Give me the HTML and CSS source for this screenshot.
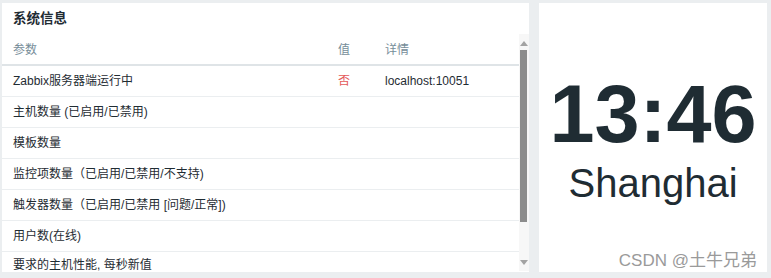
FILE: index.html
```html
<!DOCTYPE html>
<html lang="zh-CN">
<head>
<meta charset="UTF-8" />
<title>系统信息</title>
<link rel="stylesheet" href="styles.css">
</head>
<body>

  <div class="dashboard">

    <!-- 系统信息 -->
    <div class="widget info">
      <div class="widget-head">系统信息</div>
      <div class="widget-body">
        <div class="table-wrap">
          <table class="list">
            <thead>
              <tr>
                <th class="c-param">参数</th>
                <th class="c-value">值</th>
                <th>详情</th>
              </tr>
            </thead>
            <tbody>
              <tr>
                <td>Zabbix服务器端运行中</td>
                <td class="red">否</td>
                <td>localhost:10051</td>
              </tr>
              <tr><td>主机数量 (已启用/已禁用)</td><td></td><td></td></tr>
              <tr><td>模板数量</td><td></td><td></td></tr>
              <tr><td>监控项数量（已启用/已禁用/不支持)</td><td></td><td></td></tr>
              <tr><td>触发器数量（已启用/已禁用 [问题/正常])</td><td></td><td></td></tr>
              <tr><td>用户数(在线)</td><td></td><td></td></tr>
              <tr><td class="last">要求的主机性能, 每秒新值</td><td></td><td></td></tr>
            </tbody>
          </table>
        </div>
        <div class="scrollbar">
          <div class="sb-btn"><span class="arrow up"></span></div>
          <div class="sb-track"><div class="sb-thumb"></div></div>
          <div class="sb-btn"><span class="arrow down"></span></div>
        </div>
      </div>
    </div>

    <!-- 时钟 -->
    <div class="widget clock">
      <div class="clock-time">13:46</div>
      <div class="clock-zone">Shanghai</div>
    </div>

  </div>

  <div class="watermark">CSDN @土牛兄弟</div>

</body>
</html>
```

FILE: styles.css
```css
:root {
  --fondo: #ebeef0;
  --texto: #1f2c33;
  --cinza: #768d99;
  --linha: #ebeef0;
}

* {
  margin: 0;
  padding: 0;
  box-sizing: border-box;
}

body {
  width: 771px;
  height: 278px;
  overflow: hidden;
  background-color: var(--fondo);
  color: var(--texto);
  font-family: "Liberation Sans", "Noto Sans CJK SC", sans-serif;
  font-size: 12px;
  position: relative;
}

.dashboard {
  display: flex;
  gap: 10px;
  padding: 3px 4px 6px 2px;
  height: 278px;
}

.widget {
  background-color: white;
}

/* Sistema */
.info {
  width: 527px;
  display: flex;
  flex-direction: column;
}

.widget-head {
  height: 31px;
  padding: 8px 11px 0;
  font-size: 13.5px;
  font-weight: 700;
  line-height: 16px;
}

.widget-body {
  flex: 1;
  display: flex;
  min-height: 0;
}

.table-wrap {
  flex: 1;
  overflow: hidden;
}

table.list {
  width: 100%;
  border-collapse: collapse;
  table-layout: fixed;
}

.list th {
  height: 31px;
  text-align: left;
  font-weight: 400;
  color: var(--cinza);
  padding: 2px 11px 0;
  border-bottom: 2px solid #dfe4e7;
  line-height: 14px;
}

.list th.c-param { width: 325px; }
.list th.c-value { width: 47px; }

.list td {
  height: 31px;
  padding: 0 11px;
  border-bottom: 1px solid var(--linha);
  line-height: 14px;
  white-space: nowrap;
}

.list td.last {
  vertical-align: top;
  padding-top: 6px;
}

.list td.red {
  color: #e45959;
}

/* Scroll falso */
.scrollbar {
  width: 10px;
  background-color: #f7f7f7;
  display: flex;
  flex-direction: column;
  margin-bottom: 1px;
}

.sb-btn {
  height: 16px;
  display: flex;
  align-items: center;
  justify-content: center;
}

.sb-track {
  flex: 1;
  padding: 0 2px 33px 1px;
}

.sb-thumb {
  height: 172px;
  background-color: #8c8c8c;
}

.arrow {
  width: 0;
  height: 0;
  border-left: 4px solid transparent;
  border-right: 4px solid transparent;
}

.arrow.up {
  border-bottom: 5px solid #a3a3a3;
  margin-top: 2px;
}

.arrow.down {
  border-top: 5px solid #a3a3a3;
  margin-bottom: 1px;
}

/* Relogio */
.clock {
  width: 228px;
  display: flex;
  flex-direction: column;
  align-items: center;
  justify-content: center;
  padding-top: 1px;
}

.clock-time {
  font-size: 81px;
  font-weight: 700;
  line-height: 1;
}

.clock-zone {
  font-size: 40px;
  line-height: 1;
  margin-top: 8px;
}

.watermark {
  position: absolute;
  right: 14px;
  bottom: 9px;
  font-size: 17px;
  line-height: 1;
  color: #9a9a9a;
}
```
